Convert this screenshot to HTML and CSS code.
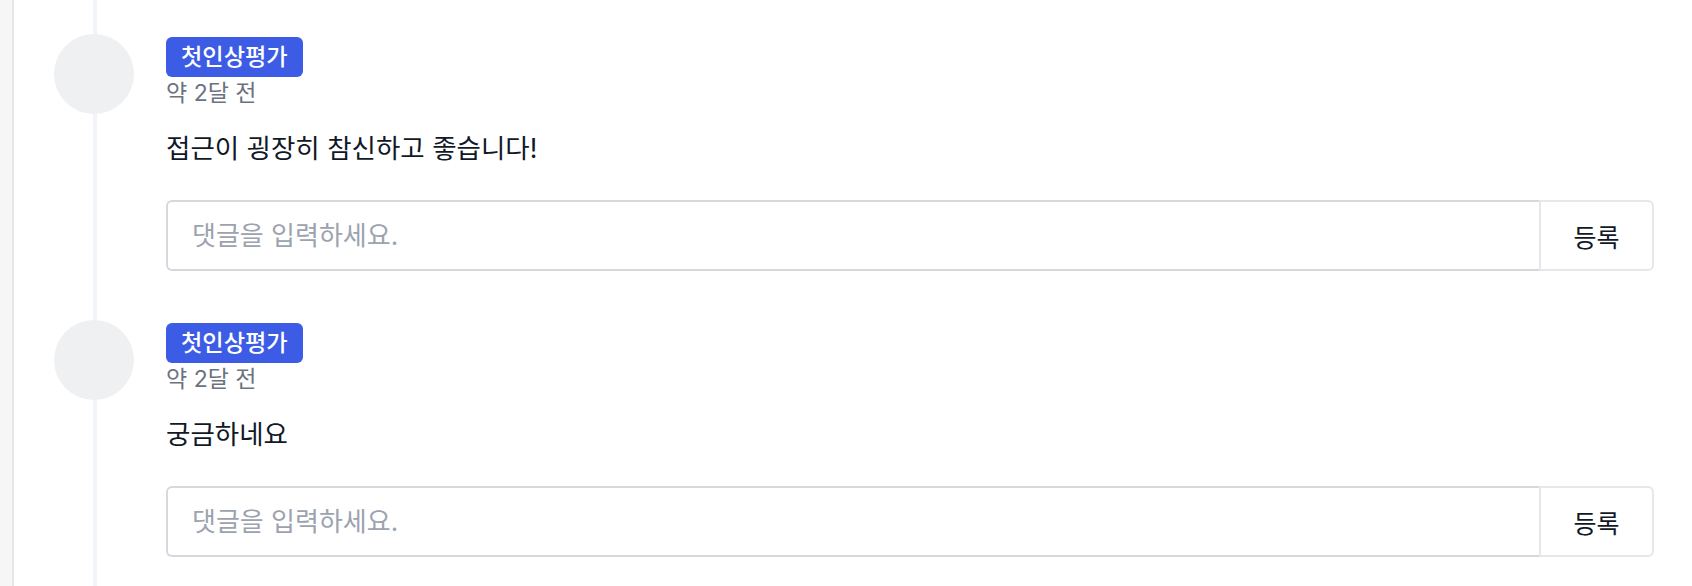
FILE: index.html
```html
<!DOCTYPE html>
<html lang="ko">
<head>
  <meta charset="UTF-8">
  <meta name="viewport" content="width=device-width, initial-scale=1.0">
  <title>댓글</title>
  <link rel="stylesheet" href="styles.css">
</head>
<body>
  <div class="page">
    <div class="side"></div>
    <div class="timeline">
      <div class="comment">
        <div class="avatar"></div>
        <div class="content">
          <span class="badge">첫인상평가</span>
          <div class="meta">약 2달 전</div>
          <p class="text">접근이 굉장히 참신하고 좋습니다!</p>
          <form class="reply">
            <input class="reply-input" type="text" placeholder="댓글을 입력하세요.">
            <button class="reply-btn" type="button">등록</button>
          </form>
        </div>
      </div>

      <div class="comment">
        <div class="avatar"></div>
        <div class="content">
          <span class="badge">첫인상평가</span>
          <div class="meta">약 2달 전</div>
          <p class="text">궁금하네요</p>
          <form class="reply">
            <input class="reply-input" type="text" placeholder="댓글을 입력하세요.">
            <button class="reply-btn" type="button">등록</button>
          </form>
        </div>
      </div>
    </div>
  </div>
</body>
</html>
```

FILE: styles.css
```css
body {
  margin: 0;
  font-family: Inter, "Noto Sans CJK KR", sans-serif;
  color: #111827;
  background-color: white;
}
.page {
  display: flex;
  min-height: 586px;
}
.side {
  width: 12px;
  flex-shrink: 0;
  background-color: #f6f6f7;
  border-right: 2px solid #e6e6ec;
}
.timeline {
  position: relative;
  flex: 1;
  padding: 34px 38px 0 40px;
}
.timeline::before {
  content: "";
  position: absolute;
  top: 0;
  bottom: 0;
  left: 79px;
  width: 4px;
  background-color: #f1f4f9;
}
.comment {
  position: relative;
  display: flex;
  gap: 32px;
  margin-bottom: 49px;
}
.avatar {
  width: 80px;
  height: 80px;
  flex-shrink: 0;
  border-radius: 50%;
  background-color: #eff0f2;
}
.content {
  flex: 1;
  padding-top: 3px;
}
.badge {
  display: inline-block;
  padding: 4px 15px;
  line-height: 32px;
  font-size: 23.2px;
  font-weight: 500;
  color: white;
  background-color: #3c5ce5;
  border-radius: 6px;
}
.meta {
  font-size: 23px;
  line-height: 32px;
  color: #6b7280;
}
.text {
  margin: 21px 0 0;
  font-size: 26.5px;
  line-height: 36px;
}
.reply {
  display: flex;
  margin-top: 34px;
  height: 71px;
}
.reply-input {
  flex: 1;
  min-width: 0;
  box-sizing: border-box;
  padding: 0 24px;
  font-family: inherit;
  font-size: 26px;
  color: #111827;
  border: 2px solid #d5d8dd;
  border-right: none;
  border-radius: 6px 0 0 6px;
  outline: none;
}
.reply-input::placeholder {
  color: #9ca3af;
}
.reply-btn {
  width: 115px;
  box-sizing: border-box;
  font-family: inherit;
  font-size: 25px;
  color: #111827;
  background-color: white;
  border: 2px solid #e5e7eb;
  border-radius: 0 6px 6px 0;
}
```
